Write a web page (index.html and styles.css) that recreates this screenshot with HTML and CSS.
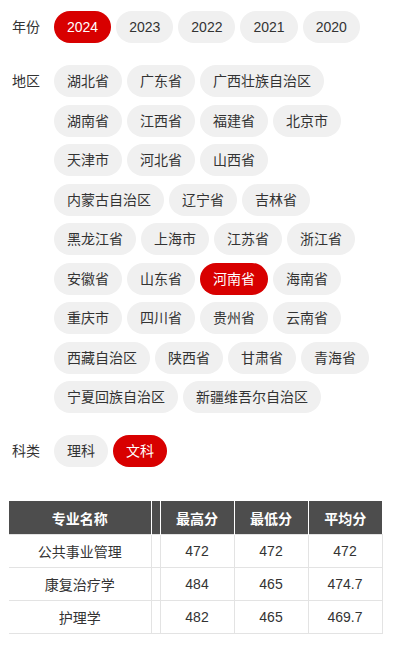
FILE: index.html
```html
<!DOCTYPE html>
<html lang="zh">
<head>
<meta charset="utf-8">
<title>分数线</title>
<link rel="stylesheet" href="styles.css">
</head>
<body>
<div class="page">
  <div class="filter">
    <div class="label">年份</div>
    <div class="chips">
      <span class="chip active">2024</span>
      <span class="chip">2023</span>
      <span class="chip">2022</span>
      <span class="chip">2021</span>
      <span class="chip">2020</span>
    </div>
  </div>
  <div class="filter">
    <div class="label">地区</div>
    <div class="chips">
      <span class="chip">湖北省</span>
      <span class="chip">广东省</span>
      <span class="chip">广西壮族自治区</span>
      <span class="chip">湖南省</span>
      <span class="chip">江西省</span>
      <span class="chip">福建省</span>
      <span class="chip">北京市</span>
      <span class="chip">天津市</span>
      <span class="chip">河北省</span>
      <span class="chip">山西省</span>
      <span class="chip">内蒙古自治区</span>
      <span class="chip">辽宁省</span>
      <span class="chip">吉林省</span>
      <span class="chip">黑龙江省</span>
      <span class="chip">上海市</span>
      <span class="chip">江苏省</span>
      <span class="chip">浙江省</span>
      <span class="chip">安徽省</span>
      <span class="chip">山东省</span>
      <span class="chip active">河南省</span>
      <span class="chip">海南省</span>
      <span class="chip">重庆市</span>
      <span class="chip">四川省</span>
      <span class="chip">贵州省</span>
      <span class="chip">云南省</span>
      <span class="chip">西藏自治区</span>
      <span class="chip">陕西省</span>
      <span class="chip">甘肃省</span>
      <span class="chip">青海省</span>
      <span class="chip">宁夏回族自治区</span>
      <span class="chip">新疆维吾尔自治区</span>
    </div>
  </div>
  <div class="filter">
    <div class="label">科类</div>
    <div class="chips">
      <span class="chip">理科</span>
      <span class="chip active">文科</span>
    </div>
  </div>

  <table class="scores">
    <colgroup>
      <col class="c-name">
      <col class="c-gap">
      <col class="c-num">
      <col class="c-num">
      <col class="c-num">
    </colgroup>
    <thead>
      <tr><th>专业名称</th><th></th><th>最高分</th><th>最低分</th><th>平均分</th></tr>
    </thead>
    <tbody>
      <tr><td>公共事业管理</td><td></td><td>472</td><td>472</td><td>472</td></tr>
      <tr><td>康复治疗学</td><td></td><td>484</td><td>465</td><td>474.7</td></tr>
      <tr><td>护理学</td><td></td><td>482</td><td>465</td><td>469.7</td></tr>
    </tbody>
  </table>
</div>
</body>
</html>
```

FILE: styles.css
```css
html, body {
  margin: 0;
  padding: 0;
  background: #fff;
}
body {
  font-family: "Liberation Sans", Arial, "Noto Sans CJK SC", sans-serif;
  color: #333;
  font-size: 14px;
}
.page {
  padding: 11px 0 0 9px;
}
.filter {
  display: flex;
  align-items: flex-start;
  margin-bottom: 22px;
  width: 368px;
}
.label {
  width: 45px;
  flex: none;
  padding-left: 3px;
  box-sizing: border-box;
  line-height: 32px;
  color: #333;
}
.chips {
  display: flex;
  flex-wrap: wrap;
  column-gap: 5px;
  row-gap: 7.5px;
  flex: 1;
}
.chip {
  display: inline-block;
  height: 32px;
  line-height: 32px;
  padding: 0 13px;
  border-radius: 16px;
  background: #f0f0f0;
  color: #333;
  white-space: nowrap;
}
.chip.active {
  background: #d80000;
  color: #fff;
}
.scores {
  margin-top: 34px;
  border-collapse: collapse;
  table-layout: fixed;
  width: 373px;
  font-size: 14px;
}
.c-name { width: 142px; }
.c-gap { width: 9px; }
.c-num { width: 74px; }
.scores th {
  background: #4d4d4d;
  color: #fff;
  font-weight: bold;
  height: 33px;
  padding: 0;
  text-align: center;
  border-left: 1px solid #fff;
}
.scores th:first-child {
  border-left: none;
}
.scores td {
  height: 32px;
  padding: 0;
  text-align: center;
  color: #333;
  border: 1px solid #e3e3e3;
}
.scores td:first-child {
  border-left: none;
}
```
